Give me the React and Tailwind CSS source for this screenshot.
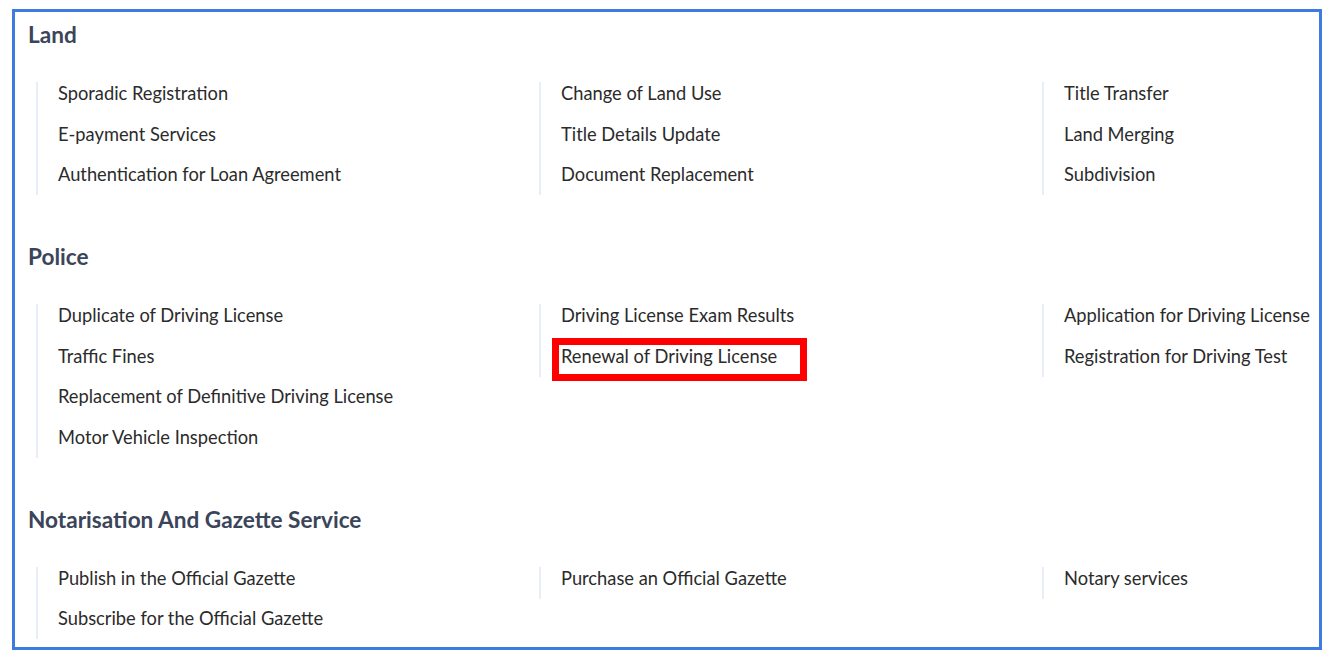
const SECTIONS = [
  {
    title: 'Land',
    columns: [
      ['Sporadic Registration', 'E-payment Services', 'Authentication for Loan Agreement'],
      ['Change of Land Use', 'Title Details Update', 'Document Replacement'],
      ['Title Transfer', 'Land Merging', 'Subdivision'],
    ],
  },
  {
    title: 'Police',
    columns: [
      [
        'Duplicate of Driving License',
        'Traffic Fines',
        'Replacement of Definitive Driving License',
        'Motor Vehicle Inspection',
      ],
      ['Driving License Exam Results', 'Renewal of Driving License'],
      ['Application for Driving License', 'Registration for Driving Test'],
    ],
  },
  {
    title: 'Notarisation And Gazette Service',
    columns: [
      ['Publish in the Official Gazette', 'Subscribe for the Official Gazette'],
      ['Purchase an Official Gazette'],
      ['Notary services'],
    ],
  },
];

const HIGHLIGHT = 'Renewal of Driving License';

function ServiceList({ items }) {
  return (
    <ul className="flex flex-col gap-[18.5px] border-l-2 border-[#e8eef8] pl-5 pb-[10px]">
      {items.map((item) => (
        <li key={item} className="relative text-[18.3px] leading-[22px] text-[#2b2b2b] whitespace-nowrap">
          {item === HIGHLIGHT && (
            <span className="pointer-events-none absolute -left-[9px] -top-[7px] h-[43px] w-[255px] border-[7px] border-[#ff0000]" />
          )}
          <span className="relative">{item}</span>
        </li>
      ))}
    </ul>
  );
}

export default function App() {
  return (
    <div className="bg-white w-[1331px] h-[660px] pt-[9px] pl-[12px]" style={{ fontFamily: 'Lato, "Liberation Sans", sans-serif' }}>
      <div className="w-[1310px] h-[641px] border-[3px] border-[#3d7be0] pl-[13px] pt-[9px] overflow-hidden">
        <div className="flex flex-col gap-[48px]">
          {SECTIONS.map((section) => (
            <section key={section.title}>
              <h2 className="text-[22.6px] leading-[28px] font-bold text-[#3b4559]">{section.title}</h2>
              <div className="mt-[33px] ml-2 grid grid-cols-[503px_503px_1fr] items-start">
                {section.columns.map((col, i) => (
                  <ServiceList key={i} items={col} />
                ))}
              </div>
            </section>
          ))}
        </div>
      </div>
    </div>
  );
}
